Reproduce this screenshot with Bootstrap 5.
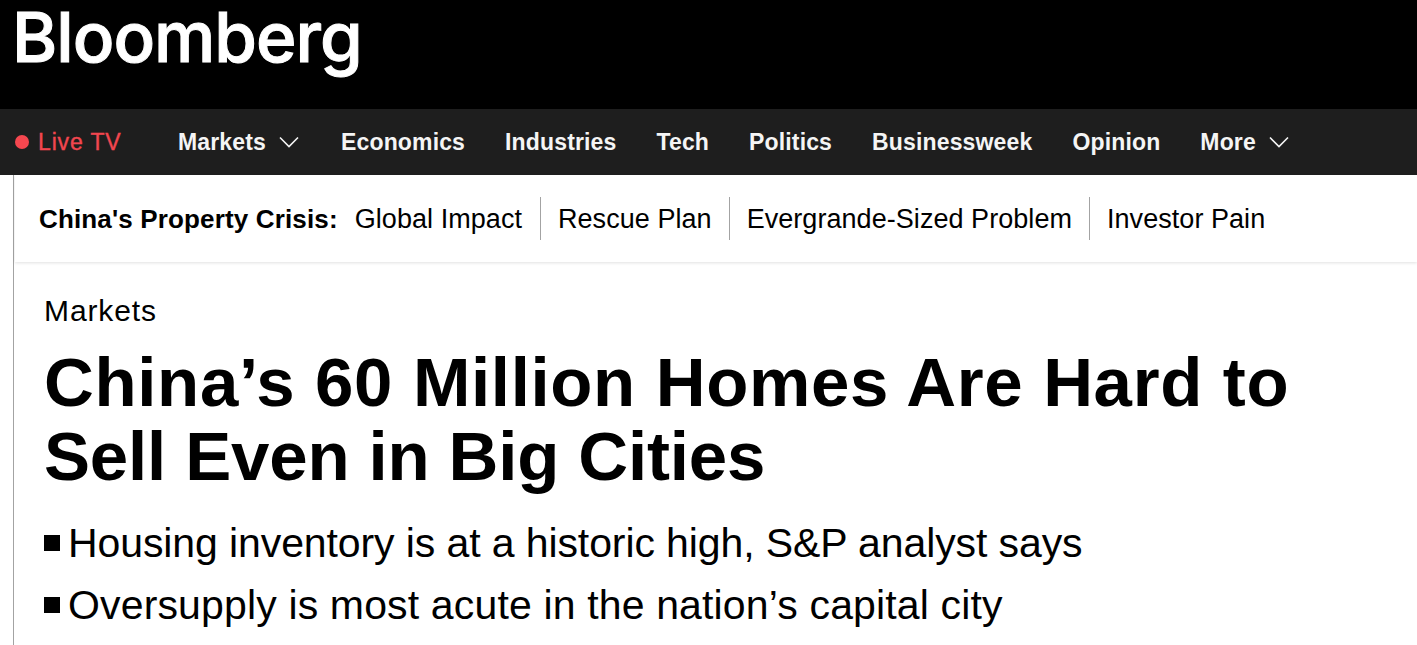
<!DOCTYPE html>
<html lang="en">
<head>
  <meta charset="UTF-8" />
  <meta name="viewport" content="width=device-width, initial-scale=1.0"/>
  <title>China's 60 Million Homes Are Hard to Sell Even in Big Cities</title>
  <link href="https://cdn.jsdelivr.net/npm/bootstrap@5.3.2/dist/css/bootstrap.min.css" rel="stylesheet"/>
  <style>
    body {
      background: #fff;
      color: #000;
      font-family: "Liberation Sans", Arial, sans-serif;
      overflow: hidden;
    }
    .top-bar {
      height: 109px;
      background: #000;
      padding: 0 0 0 12px;
    }
    .logo-word {
      color: #fff;
      font-family: Inter, sans-serif;
      font-weight: 500;
      font-size: 69px;
      line-height: 74px;
      letter-spacing: -1px;
      -webkit-text-stroke: 1px #fff;
      text-decoration: none;
    }
    .menu-bar {
      height: 66px;
      background: #1e1e1e;
      padding-left: 15px;
      font-size: 23px;
      font-weight: 700;
      letter-spacing: .15px;
    }
    .live-link {
      color: #f2464f;
      width: 163px;
      text-decoration: none;
      font-size: 23px;
      font-weight: 400;
      letter-spacing: .85px;
      -webkit-text-stroke: 0.4px #f2464f;
    }
    .live-dot {
      width: 14px;
      height: 14px;
      border-radius: 50%;
      background: #f5474f;
      margin-right: 9px;
    }
    .menu-link {
      color: #f5f5f5;
      text-decoration: none;
      margin-right: 40px;
    }
    .menu-link svg { margin: 0 2px 0 13px; }
    .page-body {
      margin-left: 13px;
      border-left: 1px solid #a3a3a3;
      height: 470px;
    }
    .crisis-strip {
      height: 87px;
      padding-left: 24px;
      margin-left: 1px;
      box-shadow: 0 1px 3px rgba(0, 0, 0, .12);
      font-size: 27px;
      letter-spacing: .05px;
    }
    .crisis-title {
      font-weight: 700;
      font-size: 26px;
      letter-spacing: .15px;
      margin-right: 17px;
      padding-top: 2px;
    }
    .crisis-link {
      color: #000;
      text-decoration: none;
      line-height: 41px;
      padding: 2px 17px 0 0;
      margin-right: 17px;
      border-right: 1px solid #a3a3a3;
    }
    .crisis-title + .crisis-link { padding-right: 18px; }
    .crisis-link:last-child { border-right: 0; }
    .story-head { padding: 29px 0 0 30px; }
    .eyebrow-link {
      color: #000;
      text-decoration: none;
      font-size: 30px;
      line-height: 40px;
      letter-spacing: .9px;
      display: block;
    }
    .story-title {
      font-family: "Liberation Sans", Arial, sans-serif;
      font-weight: 700;
      font-size: 69px;
      line-height: 74px;
      margin: 15px 0 18px;
    }
    .title-first { letter-spacing: .65px; }
    .title-second { letter-spacing: -.15px; }
    .point-row {
      font-size: 41px;
      line-height: 62px;
    }
    .point-first { letter-spacing: -.1px; }
    .point-second { letter-spacing: .15px; }
    .point-box {
      width: 16px;
      height: 16px;
      background: #000;
      margin-right: 8px;
    }
  </style>
</head>
<body>

  <!-- Masthead -->
  <header class="top-bar d-flex align-items-start">
    <a class="logo-word" href="#">Bloomberg</a>
  </header>

  <!-- Main nav -->
  <nav class="menu-bar d-flex align-items-center">
    <a class="live-link d-flex align-items-center" href="#"><span class="live-dot"></span>Live TV</a>
    <a class="menu-link d-inline-flex align-items-center" href="#">Markets<svg width="20" height="12" viewBox="0 0 20 12" fill="none" stroke="#f5f5f5" stroke-width="1.6"><path d="M1 1.5l9 9 9-9"/></svg></a>
    <a class="menu-link" href="#">Economics</a>
    <a class="menu-link" href="#">Industries</a>
    <a class="menu-link" href="#">Tech</a>
    <a class="menu-link" href="#">Politics</a>
    <a class="menu-link" href="#">Businessweek</a>
    <a class="menu-link" href="#">Opinion</a>
    <a class="menu-link d-inline-flex align-items-center" href="#">More<svg width="20" height="12" viewBox="0 0 20 12" fill="none" stroke="#f5f5f5" stroke-width="1.6"><path d="M1 1.5l9 9 9-9"/></svg></a>
  </nav>

  <div class="page-body">
    <!-- Topic strip -->
    <div class="crisis-strip d-flex align-items-center">
      <span class="crisis-title">China's Property Crisis:</span>
      <a class="crisis-link" href="#">Global Impact</a>
      <a class="crisis-link" href="#">Rescue Plan</a>
      <a class="crisis-link" href="#">Evergrande-Sized Problem</a>
      <a class="crisis-link" href="#">Investor Pain</a>
    </div>

    <!-- Story -->
    <main class="story-head">
      <a class="eyebrow-link" href="#">Markets</a>
      <h1 class="story-title"><span class="title-first">China’s 60 Million Homes Are Hard to</span><br><span class="title-second">Sell Even in Big Cities</span></h1>
      <div class="point-row point-first d-flex align-items-center"><span class="point-box"></span>Housing inventory is at a historic high, S&amp;P analyst says</div>
      <div class="point-row point-second d-flex align-items-center"><span class="point-box"></span>Oversupply is most acute in the nation’s capital city</div>
    </main>
  </div>

  <script src="https://cdn.jsdelivr.net/npm/bootstrap@5.3.2/dist/js/bootstrap.bundle.min.js"></script>
</body>
</html>
